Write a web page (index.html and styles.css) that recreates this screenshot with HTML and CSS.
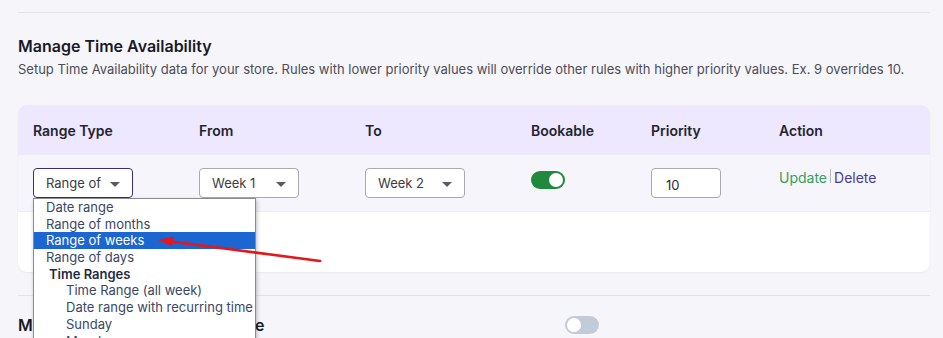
FILE: index.html
```html
<!DOCTYPE html>
<html lang="en">
<head>
  <meta charset="UTF-8" />
  <title>Time Availability</title>
  <link rel="stylesheet" href="styles.css">
</head>
<body>
  <div class="page">
    <div class="divider"></div>
    <div class="section-head">
      <h2 class="section-title">Manage Time Availability</h2>
      <p class="section-desc">Setup Time Availability data for your store. Rules with lower priority values will override other rules with higher priority values. Ex. 9 overrides 10.</p>
    </div>

    <div class="avail-card">
      <div class="avail-grid avail-header">
        <span>Range Type</span>
        <span>From</span>
        <span>To</span>
        <span>Bookable</span>
        <span>Priority</span>
        <span>Action</span>
      </div>
      <div class="avail-grid avail-row">
        <div class="cell range-cell">
          <div class="select is-open">Range of <span class="caret"></span></div>
          <ul class="dropdown">
            <li>Date range</li>
            <li>Range of months</li>
            <li class="active">Range of weeks</li>
            <li>Range of days</li>
            <li class="group">Time Ranges</li>
            <li class="sub">Time Range (all week)</li>
            <li class="sub">Date range with recurring time</li>
            <li class="sub">Sunday</li>
            <li class="sub">Monday</li>
          </ul>
        </div>
        <div class="cell"><div class="select">Week 1 <span class="caret"></span></div></div>
        <div class="cell"><div class="select">Week 2 <span class="caret"></span></div></div>
        <div class="cell"><span class="toggle on"><span class="knob"></span></span></div>
        <div class="cell"><div class="num-input">10</div></div>
        <div class="cell actions">
          <a class="act-update">Update</a><span class="sep"></span><a class="act-delete">Delete</a>
        </div>
      </div>
      <div class="avail-empty"></div>
    </div>

    <div class="divider second"></div>
    <div class="sub-row">
      <h2 class="section-title">Manage Time Availability Range</h2>
      <span class="toggle"><span class="knob"></span></span>
    </div>

    <svg class="pointer-arrow" width="170" height="30" viewBox="0 0 170 30">
      <line x1="166" y1="25" x2="14" y2="5" stroke="#e5161c" stroke-width="2.6" stroke-linecap="round"/>
      <polygon points="4,4 20,0.5 18,10" fill="#e5161c"/>
    </svg>
  </div>
</body>
</html>
```

FILE: styles.css
```css
* { box-sizing: border-box; margin: 0; padding: 0; }
html, body { height: 100%; overflow: hidden; }
body {
  background: #f5f5fa;
  font-family: Inter, 'Noto Sans', sans-serif;
  color: #1d1d2b;
}
.page {
  position: relative;
  padding: 12px 13px 0 18px;
}
.divider {
  border-top: 1px solid #e2e2e9;
}
.section-head {
  margin-top: 23px;
}
.section-title {
  font-size: 16px;
  font-weight: 600;
  line-height: 20px;
  color: #1a1a26;
  white-space: nowrap;
}
.section-desc {
  margin-top: 5px;
  font-size: 13px;
  line-height: 16px;
  color: #4d4d57;
}
.avail-card {
  margin-top: 28px;
  background: #fff;
  border-radius: 9px;
  box-shadow: 0 1px 2px rgba(40, 40, 80, 0.06);
}
.avail-grid {
  display: grid;
  grid-template-columns: 166px 166px 166px 120px 128px 1fr;
  padding-left: 15px;
  align-items: center;
}
.avail-header {
  height: 50px;
  background: #ede8fd;
  border-radius: 9px 9px 0 0;
  font-size: 14px;
  font-weight: 600;
  color: #24242f;
}
.avail-row {
  height: 57px;
  background: #f6f5fb;
  border-bottom: 1px solid #ececf1;
}
.avail-empty {
  height: 60px;
}
.cell {
  position: relative;
}
.select {
  width: 100px;
  height: 30px;
  border: 1px solid #a9a9b0;
  border-radius: 4px;
  background: #fff;
  display: flex;
  align-items: center;
  padding-left: 12px;
  font-size: 13px;
  color: #3b3b45;
  position: relative;
}
.select.is-open {
  border-color: #3d2c86;
}
.caret {
  position: absolute;
  right: 12px;
  top: 13px;
  border-left: 5px solid transparent;
  border-right: 5px solid transparent;
  border-top: 5px solid #5b5b63;
}
.num-input {
  width: 70px;
  height: 30px;
  border: 1px solid #a9a9b0;
  border-radius: 4px;
  background: #fff;
  font-size: 13px;
  color: #2c2c36;
  padding: 8px 0 0 14px;
}
.toggle {
  display: inline-block;
  width: 34px;
  height: 18px;
  border-radius: 9px;
  background: #c3cbd8;
  position: relative;
  vertical-align: middle;
}
.toggle .knob {
  position: absolute;
  left: 2px;
  top: 2px;
  width: 14px;
  height: 14px;
  border-radius: 50%;
  background: #fff;
}
.toggle.on {
  background: #1f8a3b;
  margin-top: -9px;
}
.toggle.on .knob {
  left: 18px;
}
.actions {
  display: flex;
  align-items: center;
  font-size: 14px;
  margin-top: -11px;
}
.act-update { color: #34a05c; }
.act-delete { color: #4a3c92; }
.sep {
  display: inline-block;
  width: 1px;
  height: 14px;
  background: #b9b9c2;
  margin: -4px 3px 0 3px;
}
.dropdown {
  position: absolute;
  left: 0;
  top: 30px;
  width: 223px;
  list-style: none;
  background: #fff;
  border: 1px solid #8a8a90;
  box-shadow: 1px 2px 4px rgba(0, 0, 0, 0.25);
  font-size: 13px;
  color: #3a4766;
  z-index: 5;
}
.dropdown li {
  height: 16.7px;
  line-height: 16.7px;
  padding-left: 12px;
  white-space: nowrap;
}
.dropdown li.active {
  background: #1b66d0;
  color: #fff;
}
.dropdown li.group {
  padding-left: 15px;
  font-weight: 600;
  color: #1f2b44;
}
.dropdown li.sub {
  padding-left: 32px;
}
.divider.second {
  margin-top: 23px;
}
.sub-row {
  display: grid;
  grid-template-columns: 547px auto;
  justify-content: start;
  align-items: center;
  margin-top: 19px;
}
.pointer-arrow {
  position: absolute;
  left: 154px;
  top: 236px;
  z-index: 6;
}
```
